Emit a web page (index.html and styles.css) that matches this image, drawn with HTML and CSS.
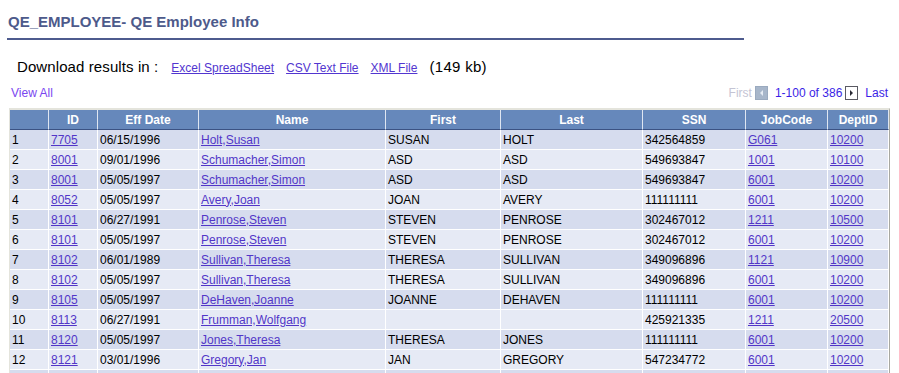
FILE: index.html
```html
<!DOCTYPE html>
<html>
<head>
<meta charset="utf-8">
<link rel="stylesheet" href="styles.css">
</head>
<body>
<div class="page">
  <h1 class="title">QE_EMPLOYEE- QE Employee Info</h1>
  <div class="download">
    <span class="dl-label">Download results in :</span>
    <a class="dl-link" href="#">Excel SpreadSheet</a>
    <a class="dl-link" href="#">CSV Text File</a>
    <a class="dl-link" href="#">XML File</a>
    <span class="dl-size">(149 kb)</span>
  </div>
  <div class="nav">
    <a class="view-all" href="#">View All</a>
    <div class="pager">
      <span class="pg-first">First</span>
      <svg class="pg-btn pg-prev" width="13" height="14" viewBox="0 0 13 14"><rect x="0.5" y="0.5" width="12" height="13" fill="#a7b6ca" stroke="#9aaabf"/><polygon points="8,4 8,10 5,7" fill="#e6ecf4"/></svg>
      <span class="pg-range">1-100 of 386</span>
      <svg class="pg-btn pg-next" width="13" height="14" viewBox="0 0 13 14"><rect x="0.5" y="0.5" width="12" height="13" fill="#ffffff" stroke="#5a5a62"/><polygon points="5,4 5,10 8,7" fill="#2a2a34"/></svg>
      <a class="pg-last" href="#">Last</a>
    </div>
  </div>
  <table class="grid">
    <thead>
      <tr>
        <th class="c-num"></th>
        <th class="c-id">ID</th>
        <th class="c-date">Eff Date</th>
        <th class="c-name">Name</th>
        <th class="c-first">First</th>
        <th class="c-last">Last</th>
        <th class="c-ssn">SSN</th>
        <th class="c-job">JobCode</th>
        <th class="c-dept">DeptID</th>
      </tr>
    </thead>
    <tbody>
      <tr class="odd"><td>1</td><td><a href="#">7705</a></td><td>06/15/1996</td><td><a href="#">Holt,Susan</a></td><td>SUSAN</td><td>HOLT</td><td>342564859</td><td><a href="#">G061</a></td><td><a href="#">10200</a></td></tr>
      <tr class="even"><td>2</td><td><a href="#">8001</a></td><td>09/01/1996</td><td><a href="#">Schumacher,Simon</a></td><td>ASD</td><td>ASD</td><td>549693847</td><td><a href="#">1001</a></td><td><a href="#">10100</a></td></tr>
      <tr class="odd"><td>3</td><td><a href="#">8001</a></td><td>05/05/1997</td><td><a href="#">Schumacher,Simon</a></td><td>ASD</td><td>ASD</td><td>549693847</td><td><a href="#">6001</a></td><td><a href="#">10200</a></td></tr>
      <tr class="even"><td>4</td><td><a href="#">8052</a></td><td>05/05/1997</td><td><a href="#">Avery,Joan</a></td><td>JOAN</td><td>AVERY</td><td>111111111</td><td><a href="#">6001</a></td><td><a href="#">10200</a></td></tr>
      <tr class="odd"><td>5</td><td><a href="#">8101</a></td><td>06/27/1991</td><td><a href="#">Penrose,Steven</a></td><td>STEVEN</td><td>PENROSE</td><td>302467012</td><td><a href="#">1211</a></td><td><a href="#">10500</a></td></tr>
      <tr class="even"><td>6</td><td><a href="#">8101</a></td><td>05/05/1997</td><td><a href="#">Penrose,Steven</a></td><td>STEVEN</td><td>PENROSE</td><td>302467012</td><td><a href="#">6001</a></td><td><a href="#">10200</a></td></tr>
      <tr class="odd"><td>7</td><td><a href="#">8102</a></td><td>06/01/1989</td><td><a href="#">Sullivan,Theresa</a></td><td>THERESA</td><td>SULLIVAN</td><td>349096896</td><td><a href="#">1121</a></td><td><a href="#">10900</a></td></tr>
      <tr class="even"><td>8</td><td><a href="#">8102</a></td><td>05/05/1997</td><td><a href="#">Sullivan,Theresa</a></td><td>THERESA</td><td>SULLIVAN</td><td>349096896</td><td><a href="#">6001</a></td><td><a href="#">10200</a></td></tr>
      <tr class="odd"><td>9</td><td><a href="#">8105</a></td><td>05/05/1997</td><td><a href="#">DeHaven,Joanne</a></td><td>JOANNE</td><td>DEHAVEN</td><td>111111111</td><td><a href="#">6001</a></td><td><a href="#">10200</a></td></tr>
      <tr class="even"><td>10</td><td><a href="#">8113</a></td><td>06/27/1991</td><td><a href="#">Frumman,Wolfgang</a></td><td></td><td></td><td>425921335</td><td><a href="#">1211</a></td><td><a href="#">20500</a></td></tr>
      <tr class="odd"><td>11</td><td><a href="#">8120</a></td><td>05/05/1997</td><td><a href="#">Jones,Theresa</a></td><td>THERESA</td><td>JONES</td><td>111111111</td><td><a href="#">6001</a></td><td><a href="#">10200</a></td></tr>
      <tr class="even"><td>12</td><td><a href="#">8121</a></td><td>03/01/1996</td><td><a href="#">Gregory,Jan</a></td><td>JAN</td><td>GREGORY</td><td>547234772</td><td><a href="#">6001</a></td><td><a href="#">10200</a></td></tr>
      <tr class="odd"><td></td><td></td><td></td><td></td><td></td><td></td><td></td><td></td><td></td></tr>
    </tbody>
  </table>
</div>
</body>
</html>
```

FILE: styles.css
```css
html, body {
  margin: 0;
  padding: 0;
  background: #ffffff;
}

body {
  font-family: "Liberation Sans", Arial, sans-serif;
  color: #000000;
  overflow: hidden;
}

.page {
  padding-top: 13px;
}

.title {
  margin: 0 0 0 7px;
  width: 736px;
  padding: 0 0 7px 1px;
  font-size: 15px;
  line-height: 18px;
  font-weight: bold;
  color: #4d5a8b;
  border-bottom: 2px solid #4e5b8e;
}

.download {
  display: flex;
  align-items: baseline;
  gap: 12px;
  margin-top: 18px;
  padding-left: 17px;
  height: 18px;
  line-height: 18px;
}

.dl-label {
  font-size: 15px;
  letter-spacing: 0.1px;
  margin-right: 1px;
}

.dl-link {
  font-size: 12px;
  color: #5236d0;
  text-decoration: underline;
}

.dl-size {
  font-size: 15px;
  letter-spacing: 0.3px;
}

.nav {
  display: flex;
  justify-content: space-between;
  align-items: center;
  margin-top: 8px;
  height: 18px;
  padding: 0 11px 0 11px;
  font-size: 12px;
  line-height: 18px;
}

.view-all {
  color: #7a46f0;
  text-decoration: none;
}

.pager {
  display: flex;
  align-items: center;
}

.pg-first {
  color: #c4c4d4;
  margin-right: 1px;
}

.pg-btn {
  display: block;
}

.pg-prev {
  margin-left: 2px;
  margin-right: 7px;
}

.pg-range {
  color: #3a1ee6;
}

.pg-next {
  margin-left: 3px;
  margin-right: 7px;
}

.pg-last {
  color: #3a1ee6;
  text-decoration: none;
}

.grid {
  margin: 6px 0 0 9px;
  width: 881px;
  border-collapse: separate;
  border-spacing: 0;
  table-layout: fixed;
  border-top: 2px solid #e4e4dc;
  border-left: 1px solid #e4e4dc;
  border-right: 1px solid #a8a8a0;
  font-size: 12px;
}

.grid th,
.grid td {
  box-sizing: border-box;
  padding: 0 0 0 2px;
  white-space: nowrap;
  overflow: hidden;
}

.grid th {
  height: 20px;
  background: #6688bb;
  color: #ffffff;
  font-weight: bold;
  text-align: center;
  border-right: 1px solid #dfe6f1;
  border-bottom: 1px solid #3b5283;
  padding: 0;
}

.grid td {
  height: 20px;
  border-right: 1px solid #ffffff;
  border-bottom: 1px solid #ffffff;
  vertical-align: middle;
}

.grid tr.odd td {
  background: #d6dcee;
}

.grid tr.even td {
  background: #e6eaf5;
}

.grid td a {
  color: #5236c8;
  text-decoration: underline;
}

.c-num { width: 39px; }
.c-id { width: 49px; }
.c-date { width: 101px; }
.c-name { width: 187px; }
.c-first { width: 115px; }
.c-last { width: 142px; }
.c-ssn { width: 103px; }
.c-job { width: 82px; }
.c-dept { width: 61px; }
```
